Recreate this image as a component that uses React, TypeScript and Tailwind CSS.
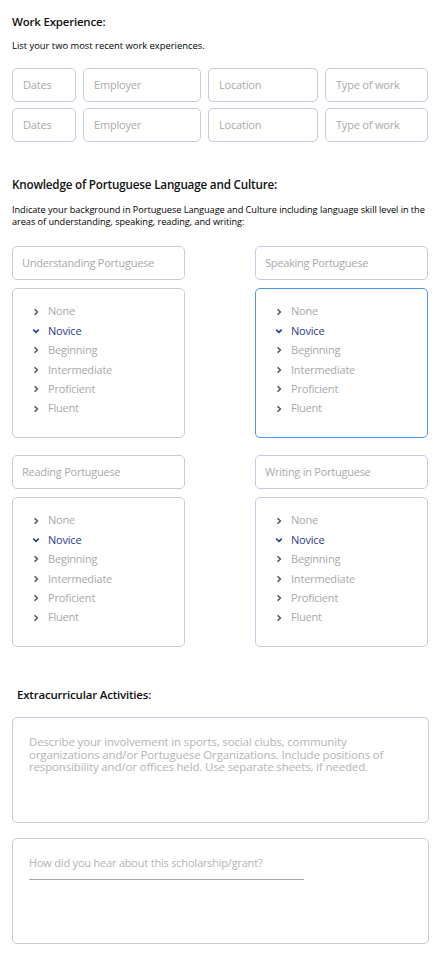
import React from "react";

const levels = ["None", "Novice", "Beginning", "Intermediate", "Proficient", "Fluent"];

const Chevron = ({ open }: { open: boolean }) => (
  <svg width="8" height="8" viewBox="0 0 8 8" className="shrink-0">
    {open ? (
      <polyline points="1.2,2.6 4,5.4 6.8,2.6" fill="none" stroke="#2c3a8c" strokeWidth="1.5" />
    ) : (
      <polyline points="2.6,1.2 5.4,4 2.6,6.8" fill="none" stroke="#555555" strokeWidth="1.5" />
    )}
  </svg>
);

const Field = ({ label, w }: { label: string; w: string }) => (
  <div className={`${w} h-[34px] flex items-center pl-[10px] border border-[#c6cae3] rounded-[5px] text-[11px] tracking-[-0.2px] text-[#a9a9a9]`}>
    {label}
  </div>
);

const SkillBox = ({ title, active }: { title: string; active?: boolean }) => (
  <div className="w-[173px] flex flex-col gap-2">
    <div className="h-[34px] flex items-center pl-[9px] border border-[#c6cae3] rounded-[5px] text-[11px] tracking-[-0.25px] text-[#a9a9a9]">
      {title}
    </div>
    <div
      className={`h-[150px] rounded-[5px] pt-[13px] pl-[19px] ${
        active ? "border-[1.5px] border-[#4a95ee]" : "border border-[#c6cae3]"
      }`}
    >
      {levels.map((l) => (
        <div key={l} className="h-[19.4px] flex items-center gap-[8px]">
          <Chevron open={l === "Novice"} />
          <span className={`text-[11px] tracking-[-0.2px] ${l === "Novice" ? "text-[#2c3a8c]" : "text-[#a9a9a9]"}`}>{l}</span>
        </div>
      ))}
    </div>
  </div>
);

export default function App() {
  return (
    <div className="w-[439px] min-h-[965px] bg-white pb-[22px]" style={{ fontFamily: '"Open Sans", "Noto Sans", sans-serif' }}>
      {/* work experience */}
      <div className="pl-3 pr-[11px] pt-[14px]">
        <h2 className="text-[11.5px] font-semibold text-[#111] leading-[16px] tracking-[-0.2px]">Work Experience:</h2>
        <p className="text-[9.4px] text-black mt-[10px] leading-[12px]">List your two most recent work experiences.</p>
        <div className="mt-[16px] flex flex-col gap-[6px]">
          {[0, 1].map((i) => (
            <div key={i} className="flex gap-[7px]">
              <Field label="Dates" w="w-[64px]" />
              <Field label="Employer" w="w-[118px]" />
              <Field label="Location" w="w-[110px]" />
              <Field label="Type of work" w="w-[103px]" />
            </div>
          ))}
        </div>
      </div>

      {/* portuguese */}
      <div className="pl-3 pr-[11px] mt-[34px]">
        <h2 className="text-[11.7px] font-semibold text-[#111] leading-[16px] tracking-[-0.2px]">
          Knowledge of Portuguese Language and Culture:
        </h2>
        <p className="text-[9.2px] text-black mt-[12px] leading-[12px] tracking-[-0.05px]">
          Indicate your background in Portuguese Language and Culture including language skill level in the areas of
          understanding, speaking, reading, and writing:
        </p>
        <div className="mt-[18px] flex justify-between">
          <SkillBox title="Understanding Portuguese" />
          <SkillBox title="Speaking Portuguese" active />
        </div>
        <div className="mt-[17px] flex justify-between">
          <SkillBox title="Reading Portuguese" />
          <SkillBox title="Writing in Portuguese" />
        </div>
      </div>

      {/* extracurricular */}
      <div className="pl-3 pr-[10px] mt-[40px]">
        <h2 className="pl-[5px] text-[11.5px] font-semibold text-[#111] leading-[16px] tracking-[-0.2px]">
          Extracurricular Activities:
        </h2>
        <div className="mt-[14px] h-[106px] border border-[#c6cae3] rounded-[5px] pl-[16px] pr-[40px] pt-[18px]">
          <p className="text-[11.5px] leading-[12.5px] tracking-[-0.15px] text-[#b4b4b4]">
            Describe your involvement in sports, social clubs, community organizations and/or Portuguese Organizations.
            Include positions of responsibility and/or offices held. Use separate sheets, if needed.
          </p>
        </div>
        <div className="mt-[15px] h-[106px] border border-[#c6cae3] rounded-[5px] pl-[16px] pt-[16px]">
          <div className="w-[275px] border-b border-[#a9a9a9] pb-[8px] text-[11px] tracking-[-0.2px] text-[#b4b4b4] leading-[16px]">
            How did you hear about this scholarship/grant?
          </div>
        </div>
      </div>
    </div>
  );
}
